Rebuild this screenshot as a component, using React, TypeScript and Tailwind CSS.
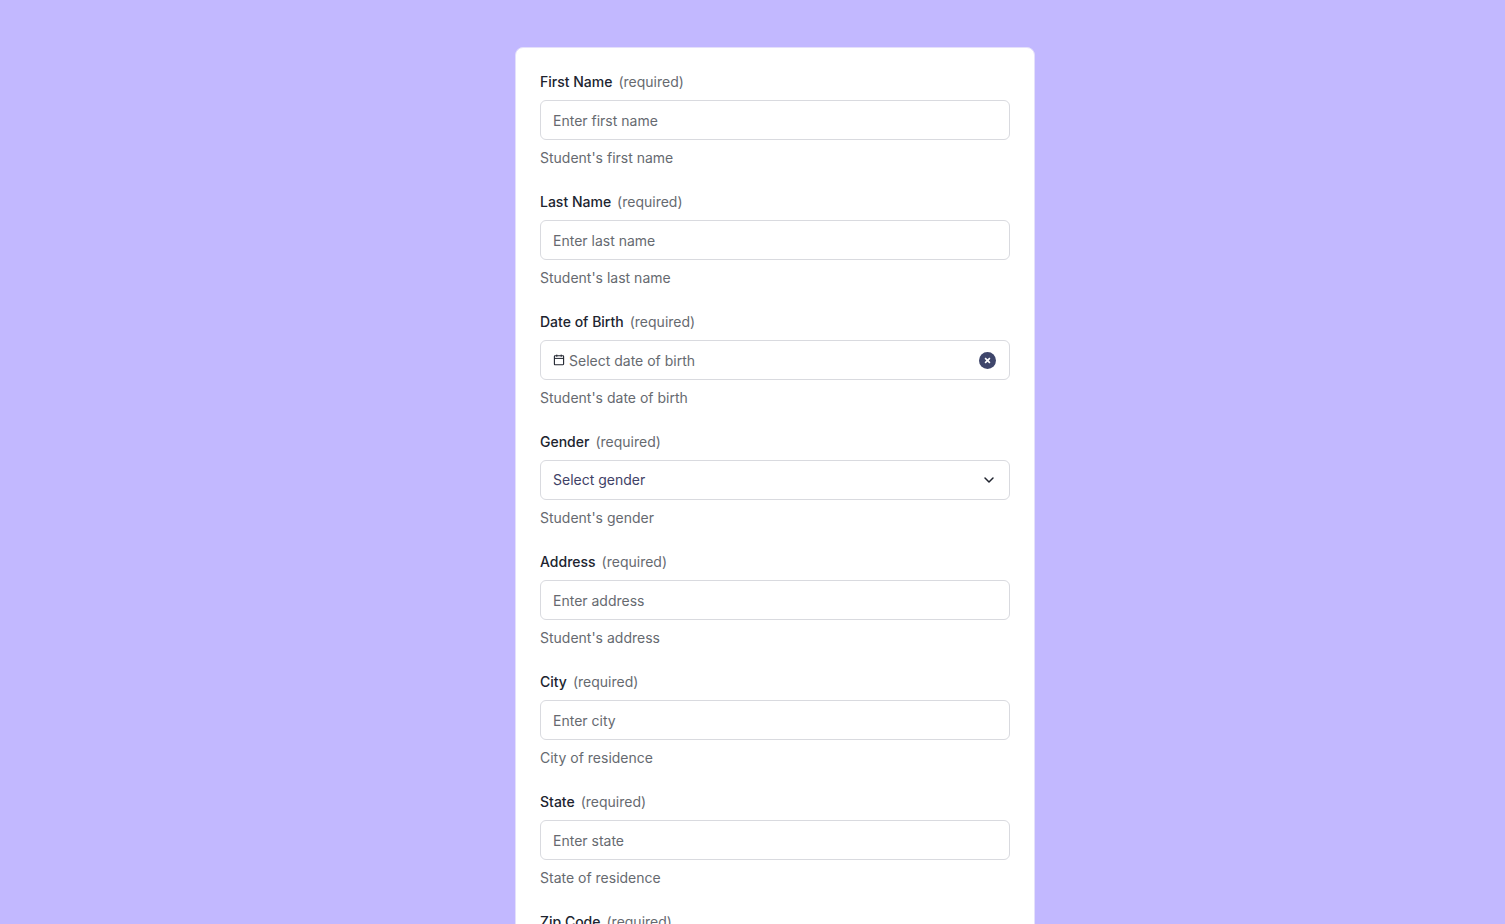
import { ChevronDown } from "lucide-react";
import type { ReactNode } from "react";

type FieldConfig = {
  id: string;
  label: string;
  placeholder: string;
  hint: string;
  kind?: "text" | "date" | "select";
};

const fields: FieldConfig[] = [
  {
    id: "first-name",
    label: "First Name",
    placeholder: "Enter first name",
    hint: "Student's first name",
  },
  {
    id: "last-name",
    label: "Last Name",
    placeholder: "Enter last name",
    hint: "Student's last name",
  },
  {
    id: "birth-date",
    label: "Date of Birth",
    placeholder: "Select date of birth",
    hint: "Student's date of birth",
    kind: "date",
  },
  {
    id: "gender",
    label: "Gender",
    placeholder: "Select gender",
    hint: "Student's gender",
    kind: "select",
  },
  {
    id: "address",
    label: "Address",
    placeholder: "Enter address",
    hint: "Student's address",
  },
  {
    id: "city",
    label: "City",
    placeholder: "Enter city",
    hint: "City of residence",
  },
  {
    id: "state",
    label: "State",
    placeholder: "Enter state",
    hint: "State of residence",
  },
  {
    id: "zip-code",
    label: "Zip Code",
    placeholder: "Enter zip code",
    hint: "Zip code of residence",
  },
];

const boxClass =
  "h-10 w-full rounded-md border border-[#d9dadf] bg-white text-[14px] leading-5";

function CalendarIcon() {
  return (
    <svg viewBox="0 0 12 12" className="size-3 shrink-0 text-[#20242f]" fill="none" stroke="currentColor">
      <rect x="1.4" y="1.8" width="9.2" height="8.9" rx="0.6" strokeWidth="1.1" />
      <path d="M1.4 4.4h9.2M3.8 .6v2.2M8.2 .6v2.2" strokeWidth="1" />
    </svg>
  );
}

function Field({ field, children }: { field: FieldConfig; children: ReactNode }) {
  return (
    <div className="flex flex-col gap-2">
      <label htmlFor={field.id} className="flex gap-1.5 font-medium text-[#20242f]">
        {field.label}
        <span className="font-normal text-[#666a70]">(required)</span>
      </label>
      {children}
      <p id={`${field.id}-hint`} className="text-[#666a70]">
        {field.hint}
      </p>
    </div>
  );
}

function Control({ field }: { field: FieldConfig }) {
  if (field.kind === "date") {
    return (
      <div className={`${boxClass} flex items-center gap-1 pr-[13px] pl-3`}>
        <CalendarIcon />
        <input
          id={field.id}
          type="text"
          required
          placeholder={field.placeholder}
          aria-describedby={`${field.id}-hint`}
          className="min-w-0 flex-1 pt-px outline-none placeholder:text-[#666a70]"
        />
        <button
          type="button"
          aria-label="Clear date"
          className="flex size-[17px] shrink-0 items-center justify-center rounded-full bg-[#3f466b]"
        >
          <svg viewBox="0 0 7 7" className="size-[7px]" fill="none" stroke="white" strokeWidth="1.6">
            <path d="M1.1 1.1l4.8 4.8M5.9 1.1L1.1 5.9" />
          </svg>
        </button>
      </div>
    );
  }

  if (field.kind === "select") {
    return (
      <div className="relative">
        <select
          id={field.id}
          required
          defaultValue=""
          aria-describedby={`${field.id}-hint`}
          className={`${boxClass} appearance-none px-3 text-[#3f4266]`}
        >
          <option value="">{field.placeholder}</option>
          <option value="female">Female</option>
          <option value="male">Male</option>
          <option value="other">Other</option>
        </select>
        <ChevronDown
          size={16}
          strokeWidth={2.25}
          className="pointer-events-none absolute top-3 right-[13px] text-[#20242f]"
        />
      </div>
    );
  }

  return (
    <input
      id={field.id}
      type="text"
      required
      placeholder={field.placeholder}
      aria-describedby={`${field.id}-hint`}
      className={`${boxClass} px-3 pt-px placeholder:text-[#666a70]`}
    />
  );
}

export default function App() {
  return (
    <main className="min-h-screen bg-[#c2b8ff] py-[47px] pl-[45px] font-['Inter',sans-serif] text-[14px] leading-5">
      <form className="mx-auto flex w-full max-w-[520px] flex-col gap-6 rounded-lg border border-[#e4e0fb] bg-white p-6">
        {fields.map((field) => (
          <Field key={field.id} field={field}>
            <Control field={field} />
          </Field>
        ))}
      </form>
    </main>
  );
}
